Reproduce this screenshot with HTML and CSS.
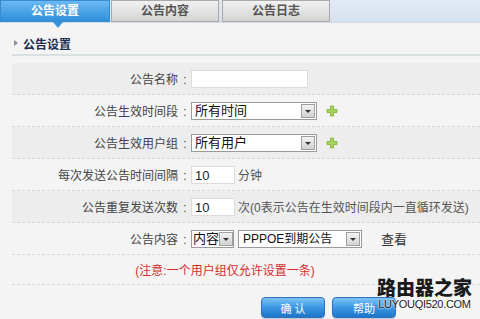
FILE: index.html
```html
<!DOCTYPE html>
<html lang="zh-CN">
<head>
    <meta charset="UTF-8">
    <title>公告设置</title>
    <link rel="stylesheet" href="styles.css">
</head>
<body>
    <!-- 顶部标签 -->
    <div class="tabs">
        <div class="tab active">公告设置</div>
        <div class="tab">公告内容</div>
        <div class="tab">公告日志</div>
    </div>

    <div class="panel">
        <h2 class="section-title"><span class="arrow"></span>公告设置</h2>

        <div class="form">
            <div class="row odd">
                <label class="label">公告名称<span class="colon">:</span></label>
                <div class="field"><span class="input name-input"></span></div>
            </div>
            <div class="row">
                <label class="label">公告生效时间段<span class="colon">:</span></label>
                <div class="field">
                    <span class="select wide"><span class="value">所有时间</span><span class="drop"></span></span>
                    <svg class="plus" width="12" height="12" viewBox="0 0 12 12"><path d="M4.5 1h3v3.5H11v3H7.5V11h-3V7.5H1v-3h3.5z" fill="#a6d45a" stroke="#7fae3a" stroke-width="0.8" stroke-linejoin="round"/></svg>
                </div>
            </div>
            <div class="row odd">
                <label class="label">公告生效用户组<span class="colon">:</span></label>
                <div class="field">
                    <span class="select wide"><span class="value">所有用户</span><span class="drop"></span></span>
                    <svg class="plus" width="12" height="12" viewBox="0 0 12 12"><path d="M4.5 1h3v3.5H11v3H7.5V11h-3V7.5H1v-3h3.5z" fill="#a6d45a" stroke="#7fae3a" stroke-width="0.8" stroke-linejoin="round"/></svg>
                </div>
            </div>
            <div class="row">
                <label class="label">每次发送公告时间间隔<span class="colon">:</span></label>
                <div class="field"><span class="input num">10</span><span class="unit">分钟</span></div>
            </div>
            <div class="row odd">
                <label class="label">公告重复发送次数<span class="colon">:</span></label>
                <div class="field"><span class="input num">10</span><span class="unit">次(0表示公告在生效时间段内一直循环发送)</span></div>
            </div>
            <div class="row">
                <label class="label">公告内容<span class="colon">:</span></label>
                <div class="field">
                    <span class="select small"><span class="value">内容</span><span class="drop"></span></span>
                    <span class="select mid"><span class="value latin">PPPOE到期公告</span><span class="drop"></span></span>
                    <span class="view">查看</span>
                </div>
            </div>
            <div class="row note-row">
                <p class="note">(注意:一个用户组仅允许设置一条)</p>
            </div>
        </div>

        <div class="actions">
            <button class="btn">确 认</button>
            <button class="btn">帮助</button>
        </div>

        <!-- 水印 -->
        <div class="watermark">
            <div class="wm-cn">路由器之家</div>
            <div class="wm-en">LUYOUQI520.COM</div>
        </div>
    </div>
</body>
</html>
```

FILE: styles.css
```css
* {
    margin: 0;
    padding: 0;
    box-sizing: border-box;
}

body {
    width: 480px;
    height: 319px;
    overflow: hidden;
    background: #f4f4f4;
    font-family: "Liberation Sans", "Noto Sans CJK SC", sans-serif;
    font-size: 12px;
    color: #333;
}

/* 顶部标签 */
.tabs {
    display: flex;
    height: 23px;
    background: linear-gradient(#e2eaf4, #d6e1ee);
    border-bottom: 1px solid #d3dce6;
}

.tab {
    width: 108px;
    height: 22px;
    margin-right: 3px;
    line-height: 21px;
    text-align: center;
    font-weight: bold;
    color: #555;
    background: linear-gradient(#f2f2f2, #d4d4d4);
    border: 1px solid #a9a9a9;
    position: relative;
}

.tab.active {
    width: 110px;
    margin-right: 1px;
    color: #fff;
    background: linear-gradient(#6ab9f2, #2f8fdc);
    border-color: #3a8ad0;
}

.tab.active::after {
    content: '';
    position: absolute;
    left: 52px;
    top: 21px;
    border-left: 5px solid transparent;
    border-right: 5px solid transparent;
    border-top: 6px solid #3592dd;
}

/* 内容面板 */
.panel {
    position: relative;
    padding-left: 12px;
    height: 296px;
}

.section-title {
    display: flex;
    align-items: center;
    height: 33px;
    padding-top: 9px;
    font-size: 12px;
    font-weight: bold;
    color: #1b2d50;
    border-bottom: 2px solid #d9e0e4;
}

.arrow {
    width: 0;
    height: 0;
    margin: 0 5px 0 2px;
    border-top: 3px solid transparent;
    border-bottom: 3px solid transparent;
    border-left: 4px solid #8a9099;
}

.form {
    margin-top: 7px;
}

.row {
    display: flex;
    align-items: center;
    height: 32px;
    border-bottom: 1px dashed #d6d6d6;
}

.row.odd {
    background: #ededed;
}

.label {
    width: 179px;
    text-align: right;
    color: #444;
}

.colon {
    display: inline-block;
    width: 12px;
    text-align: center;
    margin-left: 1px;
}

.field {
    display: flex;
    align-items: center;
}

.input {
    display: inline-block;
    height: 18px;
    line-height: 17px;
    padding-left: 3px;
    background: #fff;
    border: 1px solid #dcdcdc;
}

.name-input {
    width: 117px;
}

.num {
    width: 44px;
    font-size: 13px;
    color: #222;
}

.unit {
    margin-left: 3px;
    color: #555;
}

.select {
    display: inline-flex;
    align-items: center;
    justify-content: space-between;
    height: 18px;
    padding: 0 1px 0 3px;
    background: #fff;
    border: 1px solid #9a9a9a;
    color: #111;
    white-space: nowrap;
}

.select.wide {
    width: 126px;
}

.select.small {
    width: 43px;
    padding-left: 1px;
}

.select.mid {
    width: 124px;
    margin-left: 4px;
    padding-left: 4px;
}

.value {
    font-size: 13px;
    line-height: 16px;
}

.latin {
    font-size: 12px;
}

.drop {
    position: relative;
    flex: none;
    width: 14px;
    height: 14px;
    background: linear-gradient(#f3f3f3, #d2d2d2);
    border: 1px solid #a0a0a0;
}

.drop::after {
    content: '';
    position: absolute;
    left: 3px;
    top: 5px;
    border-left: 3px solid transparent;
    border-right: 3px solid transparent;
    border-top: 3px solid #333;
}

.plus {
    margin-left: 9px;
}

.view {
    margin-left: 19px;
    font-size: 13px;
    color: #333;
}

.note-row {
    height: 30px;
    justify-content: center;
    padding-right: 42px;
}

.note {
    color: #d42d2d;
}

/* 按钮 */
.actions {
    display: flex;
    gap: 7px;
    padding: 12px 0 0 249px;
}

.btn {
    width: 64px;
    height: 21px;
    border: 1px solid #2c74bf;
    border-radius: 4px;
    background: linear-gradient(#7cc3f6 0%, #3a97e4 50%, #1f74c8 100%);
    color: #fff;
    font-family: "Liberation Sans", "Noto Sans CJK SC", sans-serif;
    font-size: 11px;
    box-shadow: 0 1px 1px rgba(0, 0, 0, 0.2);
}

/* 水印 */
.watermark {
    position: absolute;
    right: 8px;
    bottom: 9px;
    text-align: center;
    line-height: 1;
}

.wm-cn {
    font-size: 19px;
    font-weight: 900;
    color: #1a1a1a;
    letter-spacing: 0;
}

.wm-en {
    margin-top: 1px;
    font-size: 11px;
    color: #1a1a1a;
    letter-spacing: -0.3px;
    text-shadow: 0 0 2px #fff, 0 0 2px #fff;
}
```
